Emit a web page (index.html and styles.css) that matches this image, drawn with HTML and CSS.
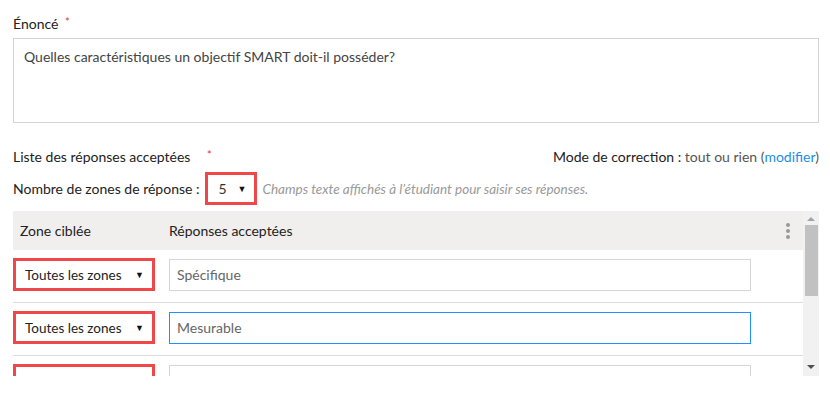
FILE: index.html
```html
<!DOCTYPE html>
<html lang="fr">
<head>
    <meta charset="UTF-8">
    <title>Énoncé</title>
    <link rel="stylesheet" href="styles.css">
</head>
<body>
    <div class="page">
        <div class="field">
            <label class="field-label">Énoncé <span class="req">*</span></label>
            <div class="statement">Quelles caractéristiques un objectif SMART doit-il posséder?</div>
        </div>

        <div class="answers-head">
            <span class="field-label">Liste des réponses acceptées <span class="req">*</span></span>
            <span class="mode"><b>Mode de correction :</b> tout ou rien (<a href="#">modifier</a>)</span>
        </div>

        <div class="zones-count">
            <span>Nombre de zones de réponse :</span>
            <span class="hl small-select">5 <i class="caret">&#9660;</i></span>
            <span class="hint">Champs texte affichés à l’étudiant pour saisir ses réponses.</span>
        </div>

        <div class="grid">
            <div class="table">
                <div class="thead">
                    <span class="col-zone">Zone ciblée</span>
                    <span class="col-answer">Réponses acceptées</span>
                    <span class="kebab"><i></i><i></i><i></i></span>
                </div>
                <div class="row">
                    <div class="col-zone"><span class="hl zone-select">Toutes les zones <i class="caret">&#9660;</i></span></div>
                    <div class="col-answer"><input class="answer" type="text" placeholder="Spécifique"></div>
                </div>
                <div class="row">
                    <div class="col-zone"><span class="hl zone-select">Toutes les zones <i class="caret">&#9660;</i></span></div>
                    <div class="col-answer"><input class="answer focused" type="text" placeholder="Mesurable"></div>
                </div>
                <!-- third row is scrolled out of view, only its top edge shows -->
                <div class="row">
                    <div class="col-zone"><span class="hl zone-select"></span></div>
                    <div class="col-answer"><input class="answer" type="text"></div>
                </div>
            </div>
            <div class="scrollbar">
                <span class="arrow up"></span>
                <span class="thumb"></span>
                <span class="arrow down"></span>
            </div>
        </div>
    </div>
</body>
</html>
```

FILE: styles.css
```css
body {
    margin: 0;
    font-family: 'Lato', 'Noto Sans', sans-serif;
    font-size: 14px;
    color: #333;
    background: #fff;
}

.page {
    width: 806px;
    padding: 15px 0 0 13px;
}

.field-label {
    color: #222;
}

.req {
    color: #e0333c;
    font-size: 11px;
    vertical-align: top;
    margin-left: 3px;
}

.statement {
    margin-top: 6px;
    height: 65px;
    border: 1px solid #d4d4d4;
    padding: 9px 10px;
    color: #444;
}

.answers-head {
    display: flex;
    justify-content: space-between;
    margin-top: 25px;
    height: 20px;
}

.answers-head .req {
    margin-left: 13px;
}

.mode b {
    font-weight: 400;
    color: #222;
}

.mode {
    color: #555;
}

.mode a {
    color: #1a8ee6;
    text-decoration: none;
}

.zones-count {
    display: flex;
    align-items: center;
    margin-top: 4px;
    color: #222;
}

.hl {
    border: 3px solid #f04848;
    box-sizing: border-box;
    display: flex;
    align-items: center;
    justify-content: space-between;
    background: #fff;
}

.small-select {
    width: 52px;
    height: 33px;
    margin-left: 5px;
    padding: 0 7px 0 11px;
    color: #333;
}

.caret {
    font-style: normal;
    font-size: 9px;
    color: #111;
}

.hint {
    font-style: italic;
    color: #999;
    font-size: 13.5px;
    margin-left: 6px;
}

.grid {
    display: flex;
    margin-top: 6px;
    height: 165px;
    overflow: hidden;
}

.table {
    flex: 1;
    overflow: hidden;
}

.thead {
    display: flex;
    align-items: center;
    height: 39px;
    background: #f0efed;
    color: #222;
}

.col-zone {
    width: 156px;
    flex: none;
}

.thead .col-zone {
    padding-left: 7px;
    width: 149px;
}

.col-answer {
    flex: 1;
}

.kebab {
    display: flex;
    flex-direction: column;
    gap: 2px;
    margin-right: 13px;
}

.kebab i {
    width: 4px;
    height: 4px;
    border-radius: 50%;
    background: #999;
}

.row {
    display: flex;
    align-items: center;
    padding: 8px 0 11px;
    border-bottom: 1px solid #dcdcdc;
}

.zone-select {
    width: 142px;
    height: 33px;
    padding: 0 8px 0 9px;
    color: #222;
    font-size: 13.5px;
}

.answer {
    width: 582px;
    height: 32px;
    box-sizing: border-box;
    border: 1px solid #d6d6d6;
    padding: 0 7px;
    font-family: inherit;
    font-size: 14px;
    color: #444;
    outline: none;
}

.answer::placeholder {
    color: #666;
}

.answer.focused {
    border-color: #1e90ff;
}

.scrollbar {
    width: 16px;
    background: #f1f1f1;
    display: flex;
    flex-direction: column;
    align-items: center;
}

.thumb {
    width: 13px;
    height: 71px;
    background: #c1c1c1;
    margin-top: 4px;
}

.arrow {
    width: 0;
    height: 0;
    border-left: 4px solid transparent;
    border-right: 4px solid transparent;
}

.arrow.up {
    border-bottom: 4px solid #a3a3a3;
    margin-top: 6px;
}

.arrow.down {
    border-top: 4px solid #505050;
    margin-top: auto;
    margin-bottom: 7px;
}
```
